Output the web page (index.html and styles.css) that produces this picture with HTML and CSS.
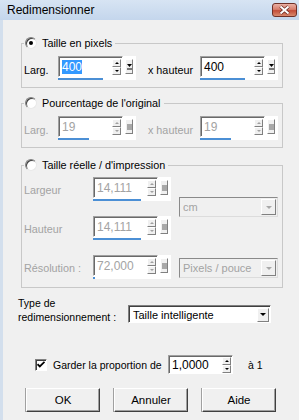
FILE: index.html
```html
<!DOCTYPE html>
<html lang="fr">

<head>
  <meta charset="UTF-8">
  <title>Redimensionner</title>
  <link rel="stylesheet" href="styles.css">
</head>

<body>
  <div class="window">
    <div class="titlebar">
      <span class="title">Redimensionner</span>
      <span class="close">
        <svg width="13" height="10" viewBox="0 0 13 10">
          <path d="M2.5 1.5l8 7M10.5 1.5l-8 7" stroke="#6a2a22" stroke-width="3.6" />
          <path d="M2.5 1.5l8 7M10.5 1.5l-8 7" stroke="#fff" stroke-width="2" />
        </svg>
      </span>
    </div>

    <div class="frame">
      <fieldset class="group">
        <legend><span class="radio on"></span>Taille en pixels</legend>
        <div class="row">
          <span class="lbl larg">Larg.</span>
          <div class="spin">
            <div class="spin-top">
              <div class="edit"><span class="val sel">400</span><span class="updown"><i class="up"></i><i class="dn"></i></span></div>
              <span class="drop"><svg width="5" height="7" viewBox="0 0 5 7"><path d="M0 1h5L2.5 4z" fill="#000" /><path d="M0 6h5" stroke="#000" /></svg></span>
            </div>
            <div class="bar" style="width:45px"></div>
          </div>
          <span class="lbl haut">x hauteur</span>
          <div class="spin">
            <div class="spin-top">
              <div class="edit"><span class="val">400</span><span class="updown"><i class="up"></i><i class="dn"></i></span></div>
              <span class="drop"><svg width="5" height="7" viewBox="0 0 5 7"><path d="M0 1h5L2.5 4z" fill="#000" /><path d="M0 6h5" stroke="#000" /></svg></span>
            </div>
            <div class="bar" style="width:45px"></div>
          </div>
        </div>
      </fieldset>

      <fieldset class="group off second">
        <legend><span class="radio"></span>Pourcentage de l'original</legend>
        <div class="row">
          <span class="lbl larg">Larg.</span>
          <div class="spin">
            <div class="spin-top">
              <div class="edit"><span class="val">19</span><span class="updown"><i class="up"></i><i class="dn"></i></span></div>
              <span class="drop"><b class="square"></b></span>
            </div>
            <div class="bar" style="width:31px"></div>
          </div>
          <span class="lbl haut">x hauteur</span>
          <div class="spin">
            <div class="spin-top">
              <div class="edit"><span class="val">19</span><span class="updown"><i class="up"></i><i class="dn"></i></span></div>
              <span class="drop"><b class="square"></b></span>
            </div>
            <div class="bar" style="width:31px"></div>
          </div>
        </div>
      </fieldset>

      <fieldset class="group off third">
        <legend><span class="radio"></span>Taille réelle / d'impression</legend>
        <div class="grid3">
          <span class="lbl">Largeur</span>
          <div class="spin">
            <div class="spin-top">
              <div class="edit"><span class="val">14,111</span><span class="updown"><i class="up"></i><i class="dn"></i></span></div>
              <span class="drop"><b class="square"></b></span>
            </div>
            <div class="bar" style="width:48px"></div>
          </div>
          <div class="combo cm"><span class="combo-val">cm</span><span class="combo-btn"><i class="tri"></i></span></div>

          <span class="lbl">Hauteur</span>
          <div class="spin">
            <div class="spin-top">
              <div class="edit"><span class="val">14,111</span><span class="updown"><i class="up"></i><i class="dn"></i></span></div>
              <span class="drop"><b class="square"></b></span>
            </div>
            <div class="bar" style="width:48px"></div>
          </div>

          <span class="lbl">Résolution :</span>
          <div class="spin">
            <div class="spin-top">
              <div class="edit"><span class="val">72,000</span><span class="updown"><i class="up"></i><i class="dn"></i></span></div>
              <span class="drop"><b class="square"></b></span>
            </div>
            <div class="bar" style="width:2px"></div>
          </div>
          <div class="combo ppp"><span class="combo-val">Pixels / pouce</span><span class="combo-btn"><i class="tri"></i></span></div>
        </div>
      </fieldset>

      <div class="type-row">
        <span class="type-lbl">Type de<br>redimensionnement :</span>
        <div class="select"><span class="combo-val">Taille intelligente</span><span class="combo-btn"><i class="tri"></i></span></div>
      </div>

      <div class="keep">
        <span class="check"><svg width="8" height="7" viewBox="0 0 8 7"><path d="M0.5 3.2l2.3 2.3 4.7-4.7" stroke="#000" stroke-width="1.8" fill="none" /></svg></span>
        <span class="keep-lbl">Garder la proportion de</span>
        <div class="edit ratio"><span class="val">1,0000</span><span class="updown"><i class="up"></i><i class="dn"></i></span></div>
        <span class="suffix">à 1</span>
      </div>

      <div class="buttons">
        <button class="btn">OK</button>
        <button class="btn">Annuler</button>
        <button class="btn">Aide</button>
      </div>
    </div>
  </div>
</body>

</html>
```

FILE: styles.css
```css
body {
  margin: 0;
  padding: 0;
  font-family: "Liberation Sans", Arial, sans-serif;
  font-size: 10.5px;
  color: #000;
}

.window {
  width: 299px;
  height: 420px;
  display: flex;
  flex-direction: column;
  background: #f0f0f0;
  overflow: hidden;
}

.titlebar {
  height: 20px;
  flex-shrink: 0;
  display: flex;
  align-items: center;
  justify-content: space-between;
  padding: 0 2px 0 7px;
  background: linear-gradient(to bottom, #d7e4f3, #c4d6ec);
}

.title {
  font-size: 12px;
}

.close {
  width: 23px;
  height: 12px;
  border: 1px solid #6f3027;
  border-radius: 3px;
  display: flex;
  align-items: center;
  justify-content: center;
  background: linear-gradient(to bottom, #eab0a4, #d77e6c 45%, #c34d38 55%, #d98a6e);
}

.frame {
  flex: 1;
  border-left: 3px solid #d3dfed;
  padding: 16px 16px 0 15px;
}

/* group boxes */
.group {
  margin: 0 0 0 3px;
  padding: 6px 0 7px 1px;
  border: 1px solid #c8c8c8;
  min-width: 0;
}

.group.second {
  margin-top: 8px;
}

.group.third {
  margin-top: 10px;
  padding-top: 5px;
  padding-bottom: 8px;
}

.group legend {
  display: flex;
  align-items: center;
  height: 14px;
  margin-left: 1px;
  padding: 0 3px 0 1px;
  font-size: 10.8px;
}

.radio {
  width: 12px;
  height: 12px;
  box-sizing: border-box;
  border-radius: 50%;
  border: 1px solid;
  border-color: #808080 #e8e8e8 #e8e8e8 #808080;
  box-shadow: inset 1px 1px 0 #404040;
  background: #fff;
  margin-right: 5px;
  display: flex;
  align-items: center;
  justify-content: center;
}

.radio.on::after {
  content: "";
  width: 4px;
  height: 4px;
  border-radius: 50%;
  background: #000;
}

.row {
  display: flex;
  align-items: flex-start;
}

.lbl {
  line-height: 14px;
  margin-top: 7px;
  padding-left: 1px;
  font-size: 10.8px;
}

.lbl.larg {
  width: 34px;
}

.lbl.haut {
  width: 56px;
  padding-right: 7px;
  text-align: right;
}

.off .lbl,
.off .val {
  color: #a3a3a3;
}

/* spin field with preset button and slider line */
.spin {
  width: 78px;
  height: 24px;
  background: #fff;
  display: flex;
  flex-direction: column;
}

.spin-top {
  display: flex;
  align-items: center;
  height: 21px;
}

.edit {
  width: 65px;
  height: 21px;
  box-sizing: border-box;
  border: 1px solid;
  border-color: #a0a0a0 #fff #fff #a0a0a0;
  box-shadow: inset 1px 1px 0 #696969;
  background: #fff;
  display: flex;
  align-items: center;
  justify-content: space-between;
  padding: 1px 1px 0 3px;
}

.val {
  font-size: 12px;
  line-height: 14px;
}

.val.sel {
  background: #3399ff;
  color: #fff;
}

.updown {
  display: flex;
  flex-direction: column;
  width: 9px;
}

.updown i {
  height: 8px;
  box-sizing: border-box;
  border: 1px solid;
  border-color: #fff #808080 #808080 #fff;
  background: #f0f0f0;
  display: flex;
  align-items: center;
  justify-content: center;
}

.updown .up::after,
.updown .dn::after {
  content: "";
  border-left: 2px solid transparent;
  border-right: 2px solid transparent;
}

.updown .up::after {
  border-bottom: 2px solid #000;
}

.updown .dn::after {
  border-top: 2px solid #000;
}

.off .updown .up::after {
  border-bottom-color: #a0a0a0;
}

.off .updown .dn::after {
  border-top-color: #a0a0a0;
}

.drop {
  width: 8px;
  height: 15px;
  margin-left: 2px;
  box-sizing: border-box;
  border: 1px solid;
  border-color: #fff #808080 #808080 #fff;
  background: #f0f0f0;
  display: flex;
  align-items: center;
  justify-content: center;
}

.square {
  width: 5px;
  height: 6px;
  background: #a8a8a8;
}

.bar {
  height: 2px;
  margin-top: 1px;
  background: #4b8fd5;
}

/* real size group */
.grid3 {
  display: grid;
  grid-template-columns: 70px 86px 99px;
  grid-template-rows: 24px 24px 24px;
  row-gap: 15px;
}

.grid3 .lbl {
  margin-top: 6px;
}

.combo {
  grid-column: 3;
  height: 20px;
  box-sizing: border-box;
  border: 1px solid;
  border-color: #8a8a8a #dcdcdc #dcdcdc #8a8a8a;
  background: #f0f0f0;
  display: flex;
  align-items: center;
  justify-content: space-between;
  padding: 0 1px 0 3px;
  color: #a3a3a3;
  font-size: 11px;
}

.combo.cm {
  grid-row: 1 / span 2;
  align-self: start;
  margin-top: 20px;
}

.combo.ppp {
  grid-row: 3;
  align-self: start;
  margin-top: 3px;
}

.combo-btn {
  width: 15px;
  height: 16px;
  box-sizing: border-box;
  border: 1px solid;
  border-color: #fff #808080 #808080 #fff;
  background: #f0f0f0;
  display: flex;
  align-items: center;
  justify-content: center;
}

.tri {
  border-left: 3px solid transparent;
  border-right: 3px solid transparent;
  border-top: 3px solid #a8a8a8;
}

/* resize type */
.type-row {
  display: flex;
  align-items: flex-end;
  margin-top: 8px;
}

.type-lbl {
  width: 110px;
  line-height: 14px;
}

.select {
  width: 143px;
  height: 18px;
  margin-bottom: 1px;
  box-sizing: border-box;
  border: 1px solid;
  border-color: #808080 #fff #fff #808080;
  box-shadow: inset 1px 1px 0 #404040;
  background: #fff;
  display: flex;
  align-items: center;
  justify-content: space-between;
  padding: 1px 1px 0 4px;
  font-size: 11px;
}

.select .combo-btn {
  width: 12px;
  height: 14px;
}

.select .tri {
  border-top-color: #000;
}

/* keep ratio */
.keep {
  display: flex;
  align-items: center;
  margin-top: 31px;
  padding-left: 17px;
}

.check {
  width: 12px;
  height: 12px;
  box-sizing: border-box;
  border: 1px solid;
  border-color: #808080 #fff #fff #808080;
  box-shadow: inset 1px 1px 0 #404040;
  background: #fff;
  display: flex;
  align-items: center;
  justify-content: center;
}

.keep-lbl {
  width: 115px;
  margin-left: 6px;
}

.edit.ratio {
  height: 19px;
}

.suffix {
  margin-left: 15px;
}

/* dialog buttons */
.buttons {
  display: flex;
  gap: 14px;
  margin-top: 14px;
  padding-left: 8px;
}

.btn {
  width: 74px;
  height: 24px;
  box-sizing: border-box;
  border: 1px solid;
  border-color: #fff #404040 #404040 #fff;
  box-shadow: inset -1px -1px 0 #a0a0a0, -1px 0 0 #a0a0a0;
  background: #f0f0f0;
  font-family: "Liberation Sans", Arial, sans-serif;
  font-size: 11.5px;
  color: #000;
  padding: 0;
}
```
